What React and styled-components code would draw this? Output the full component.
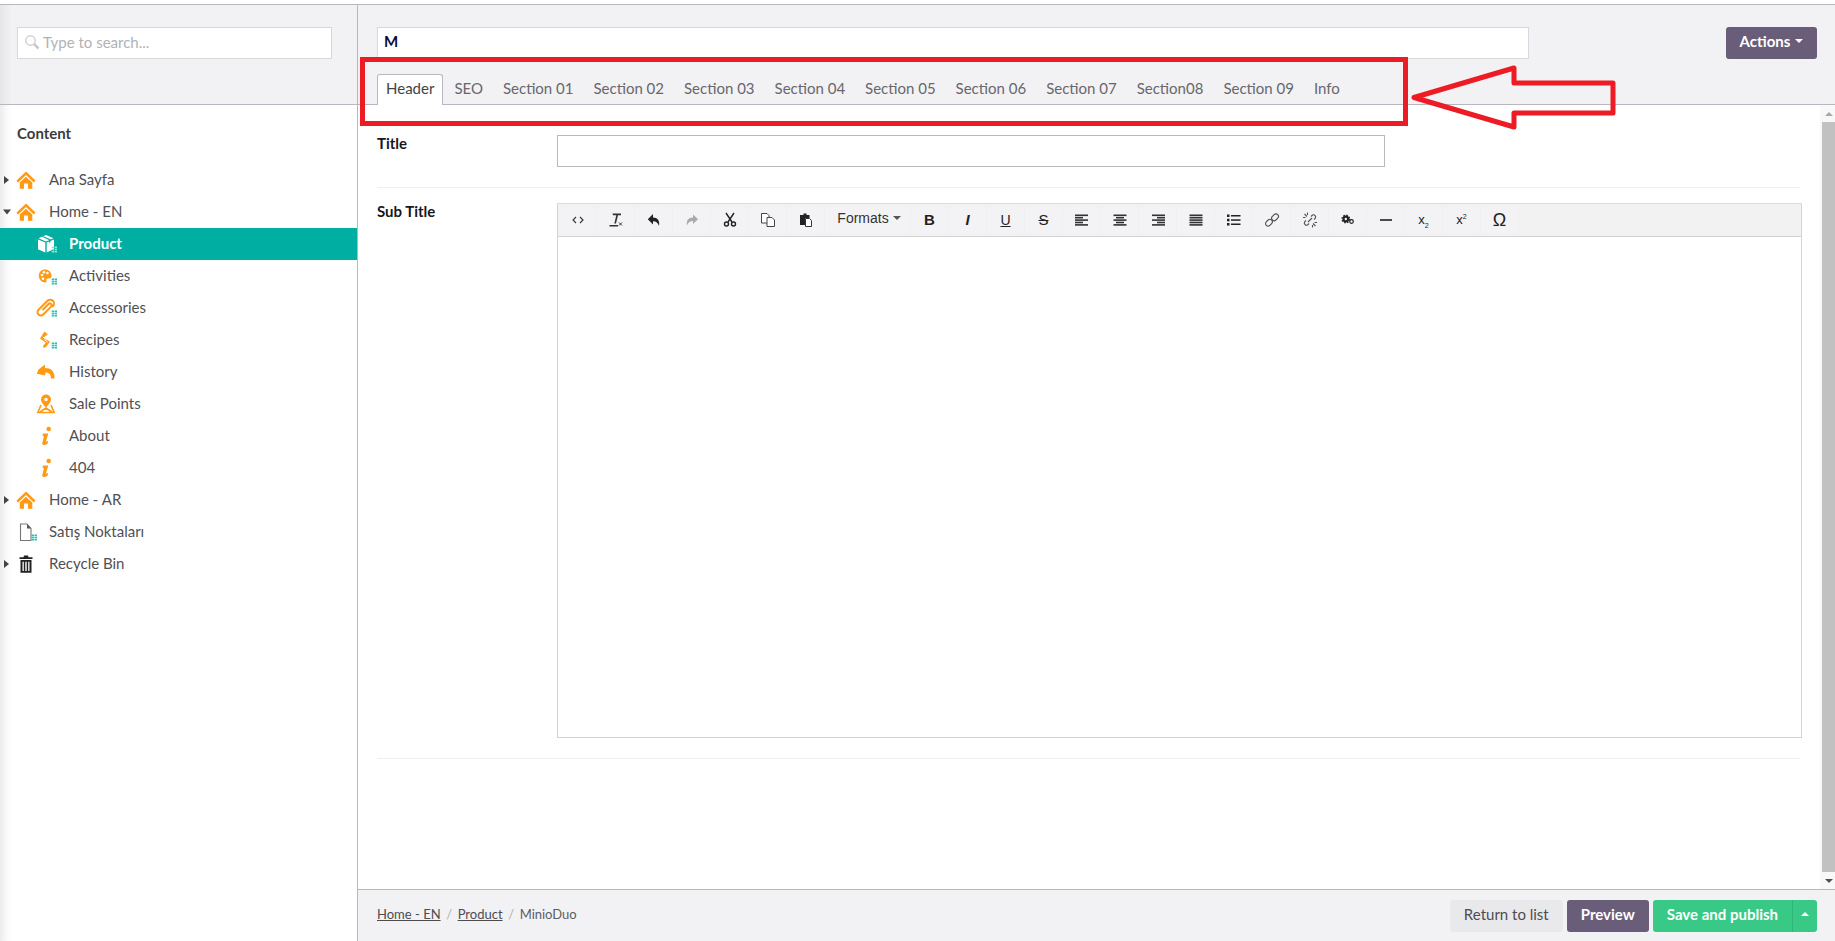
import React from "react";
import styled, { createGlobalStyle } from "styled-components";

const Global = createGlobalStyle`
  html, body { margin: 0; padding: 0; height: 100%; background: #fff; overflow: hidden; }
  #root { height: 100%; }
  * { box-sizing: border-box; }
  body { font-family: Lato, "Open Sans", "Liberation Sans", sans-serif; font-size: 15px; color: #515054; }
`;

const Page = styled.div`
  position: relative;
  height: 941px;
  padding-top: 4px;
  display: flex;
  flex-direction: column;
  overflow: hidden;
`;
const Shell = styled.div`
  flex: 1;
  min-height: 0;
  display: flex;
  border-top: 1px solid #b7b6bb;
`;
const Sidebar = styled.aside`
  width: 358px;
  flex: none;
  display: flex;
  flex-direction: column;
  border-right: 1px solid #b8b6c0;
  background: linear-gradient(to right, #ececec, #fafafa 7px, #fff 13px);
`;
const SearchArea = styled.div`
  height: 100px;
  flex: none;
  padding: 22px 0 0 17px;
  background: linear-gradient(to right, #e6e6e8, #f2f2f4 12px);
  border-bottom: 1px solid #b8b6c0;
`;
const SearchBox = styled.div`
  width: 315px;
  height: 32px;
  display: flex;
  align-items: center;
  gap: 3px;
  padding: 0 0 3px 6px;
  background: #fff;
  border: 1px solid #d8d8dc;
  color: #b2b2b5;
  font-size: 15px;
`;
const Heading = styled.div`
  height: 59px;
  padding: 18px 0 0 17px;
  line-height: 20px;
  font-weight: 700;
  font-size: 15px;
  color: #3c3c40;
`;
const Tree = styled.div`
  display: flex;
  flex-direction: column;
`;
const Row = styled.div`
  height: 32px;
  display: flex;
  align-items: center;
  padding-left: ${(p) => (p.$child ? 20 : 0)}px;
  background: ${(p) => (p.$active ? "#00aea2" : "transparent")};
  color: ${(p) => (p.$active ? "#fff" : "#515054")};
  font-weight: ${(p) => (p.$active ? 700 : 400)};
  font-size: 15px;
`;
const RowText = styled.span`
  padding-bottom: 2px;
`;
const Twisty = styled.span`
  width: 16px;
  flex: none;
  display: flex;
  align-items: center;
  padding-left: 3px;
`;
const IconBox = styled.span`
  width: 20px;
  height: 20px;
  flex: none;
  margin-right: 13px;
  display: block;
  svg { display: block; overflow: visible; }
`;
const Main = styled.main`
  flex: 1;
  min-width: 0;
  display: flex;
  flex-direction: column;
`;
const Header = styled.header`
  height: 100px;
  flex: none;
  padding: 22px 18px 0 19px;
  background: #f2f2f4;
  border-bottom: 1px solid #b8b6c0;
  display: flex;
  flex-direction: column;
  gap: 15px;
`;
const TopLine = styled.div`
  display: flex;
  justify-content: space-between;
`;
const NameBox = styled.div`
  width: 1152px;
  height: 32px;
  background: #fff;
  border: 1px solid #d8d8dc;
  padding-left: 6px;
  line-height: 27px;
  font-weight: 700;
  color: #0b0b38;
`;
const ActionButton = styled.div`
  width: 91px;
  height: 32px;
  border-radius: 3px;
  padding-bottom: 4px;
  background: #695d7a;
  color: #fff;
  font-weight: 700;
  display: flex;
  align-items: center;
  justify-content: center;
  gap: 5px;
`;
const Tabs = styled.nav`
  height: 31px;
  display: flex;
  align-items: flex-start;
`;
const Tab = styled.div`
  height: 31px;
  padding: ${(p) => (p.$active ? "0 8px 0 8px" : "0 10px")};
  margin-right: ${(p) => (p.$active ? "1px" : "0")};
  line-height: ${(p) => (p.$active ? "27px" : "29px")};
  font-size: 15px;
  color: ${(p) => (p.$active ? "#444" : "#68676c")};
  background: ${(p) => (p.$active ? "#fff" : "transparent")};
  border: ${(p) => (p.$active ? "1px solid #b8b6c0" : "none")};
  border-bottom: none;
  border-radius: 3px 3px 0 0;
  white-space: nowrap;
`;
const Body = styled.div`
  flex: 1;
  min-height: 0;
  display: flex;
`;
const Content = styled.div`
  flex: 1;
  min-width: 0;
  padding: 0 20px 0 19px;
`;
const FormRow = styled.div`
  display: grid;
  grid-template-columns: 180px 1fr;
  padding: ${(p) => (p.$first ? "30px" : "15px")} 0 20px;
  border-bottom: 1px solid #f0f0f2;
`;
const Label = styled.label`
  font-weight: 700;
  font-size: 15px;
  color: #17171c;
  line-height: 16px;
`;
const TextBox = styled.div`
  width: 828px;
  height: 32px;
  border: 1px solid #b9b9bc;
  background: #fff;
`;
const Editor = styled.div`
  height: 535px;
  margin-right: -2px;
  border: 1px solid #d3d3d5;
  border-top-color: #dcdcdc;
  display: flex;
  flex-direction: column;
`;
const Toolbar = styled.div`
  height: 33px;
  flex: none;
  display: flex;
  align-items: center;
  padding-left: 1px;
  gap: 1px;
  background: #f2f2f3;
  border-bottom: 1px solid #d3d3d5;
`;
const ToolButton = styled.span`
  width: ${(p) => (p.$wide ? "85px" : "37px")};
  height: 27px;
  flex: none;
  border-radius: 3px;
  background: #f3f3f5;
  box-shadow: 0 0 0 0.5px #efefef;
  display: flex;
  align-items: center;
  justify-content: center;
  gap: 4px;
  color: #333;
  font-family: "Liberation Sans", Arial, sans-serif;
  font-size: 14px;
  padding: ${(p) => (p.$wide ? "0 0 4px 3px" : "0 0 1px")};
`;
const Glyph = styled.span`
  font-family: "Liberation Sans", Arial, sans-serif;
  font-size: ${(p) => p.$size || 14}px;
  font-weight: ${(p) => (p.$bold ? 700 : 400)};
  font-style: ${(p) => (p.$italic ? "italic" : "normal")};
  text-decoration: ${(p) => p.$line || "none"};
  color: #222;
  line-height: 1;
  sub, sup { font-size: 7px; line-height: 0; }
`;
const Scrollbar = styled.div`
  width: 15px;
  flex: none;
  display: flex;
  flex-direction: column;
  background: #f8f8f8;
  align-items: flex-end;
`;
const ScrollArrow = styled.div`
  height: 17px;
  width: 13px;
  flex: none;
  display: flex;
  align-items: center;
  justify-content: center;
`;
const ScrollThumb = styled.div`
  flex: 1;
  width: 13px;
  background: #c1c1c1;
`;
const Footer = styled.footer`
  height: 52px;
  flex: none;
  display: flex;
  align-items: center;
  justify-content: space-between;
  padding: 0 18px 0 19px;
  background: #f2f2f4;
  border-top: 1px solid #b8b6c0;
`;
const Crumbs = styled.div`
  display: flex;
  gap: 5.6px;
  padding-bottom: 3px;
  font-size: 13px;
  color: #5d5c61;
`;
const CrumbLink = styled.a`
  color: #4d4c51;
  text-decoration: underline;
`;
const CrumbSep = styled.span`
  color: #b0afb4;
`;
const Actions = styled.div`
  display: flex;
  gap: 4px;
`;
const Btn = styled.div`
  height: 32px;
  padding: 0 ${(p) => (p.$caret ? "0" : "14px")} 3px;
  width: ${(p) => (p.$caret ? "25px" : "auto")};
  display: flex;
  align-items: center;
  justify-content: center;
  font-size: 15px;
  font-weight: ${(p) => (p.$plain ? 400 : 700)};
  color: ${(p) => (p.$plain ? "#4d4c51" : "#fff")};
  background: ${(p) => p.$bg};
  border-radius: ${(p) => (p.$caret ? "0 3px 3px 0" : p.$joined ? "3px 0 0 3px" : "3px")};
  border-left: ${(p) => (p.$caret ? "1px solid #2fb577" : "none")};
`;
const Group = styled.div`
  display: flex;
`;
const RedBox = styled.div`
  position: absolute;
  left: 360px;
  top: 57px;
  width: 1048px;
  height: 69px;
  border: 5px solid #ed1c24;
  pointer-events: none;
`;
const RedArrow = styled.svg`
  position: absolute;
  left: 1400px;
  top: 55px;
  pointer-events: none;
`;

const OR = "#ff9a15";
const Dots = ({ c = "#1fc6b6" }) => (
  <g fill={c}>
    {[0, 1].map((x) =>
      [0, 1, 2].map((y) => <rect key={x + "" + y} x={15.7 + x * 2.9} y={12.5 + y * 2.2} width="2.4" height="1.6" />)
    )}
  </g>
);
const Svg = ({ children }) => <svg width="20" height="20" viewBox="0 0 20 20">{children}</svg>;

const HomeIcon = () => (
  <Svg>
    <path fill={OR} d="M10 1.5 19.5 10.6 17.8 12.4 10 5 2.2 12.4.5 10.6Z" />
    <path fill={OR} d="M3.7 12.6 10 6.7 16.3 12.6V18.7H12V13.6H8V18.7H3.7Z" />
  </Svg>
);
const PackageIcon = () => (
  <Svg>
    <path fill="#fff" d="M10 1 17.500 4.200 10 7.400 2.500 4.200ZM2 5.400 9.300 8.600V18.500L2 15.200ZM18 5.400V15L10.700 18.500V8.600Z" />
    <path fill="#00aea2" d="M5.800 2.800 13 6V8.800L14.500 8.200V5.300L7.300 2.200Z" />
    <Dots c="#8fe3dc" />
  </Svg>
);
const PaletteIcon = () => (
  <Svg>
    <path fill={OR} d="M9 3.500C5.300 3.500 2.800 6.100 2.800 9.800 2.800 13.500 5.600 16.500 9 16.500c1.400 0 1.800-1 1.400-2-.4-1 .1-1.900 1.200-1.900h1.500c1.600 0 2.400-1 2.400-2.500C15.500 6 12.700 3.500 9 3.500Z" />
    <g fill="#fff">
      <circle cx="6" cy="9" r="1.300" />
      <circle cx="8" cy="6.300" r="1.300" />
      <circle cx="11.400" cy="7" r="1.300" />
      <circle cx="7" cy="12.800" r="1.300" />
    </g>
    <Dots />
  </Svg>
);
const ClipIcon = () => (
  <Svg>
    <path fill="none" stroke={OR} strokeWidth="2" strokeLinecap="round" d="M7 11.500 12.500 6a1.800 1.800 0 0 1 2.600 2.600L7.200 16.500a3.300 3.300 0 0 1-4.700-4.700L11.500 2.800a3.800 3.800 0 0 1 5.400 5.400" />
    <Dots />
  </Svg>
);
const RecipeIcon = () => (
  <Svg>
    <path fill={OR} d="M8.500 1.500 11.800 4.500 7.500 7.500 14 11.800 10 17 7.800 18 7 16 9.800 12.800 4 8.500Z" />
    <path stroke="#fff" strokeWidth="1" d="M6.800 7 10.500 9.800M8.500 9.800 11.500 12" />
    <Dots />
  </Svg>
);
const UndoIcon = () => (
  <Svg>
    <path fill={OR} d="M2.500 7.500 9 2.500V6C15 6 19 9 18.500 16.500H15C15 12.800 13.500 10.500 9.500 10.500L9 13.500 .8 11.800Z" />
  </Svg>
);
const PinIcon = () => (
  <Svg>
    <path fill={OR} d="M10 .5a5 5 0 0 0-5 5c0 3.400 5 8 5 8s5-4.600 5-8a5 5 0 0 0-5-5Zm0 3.200a1.800 1.800 0 1 1 0 3.600 1.800 1.800 0 0 1 0-3.600Z" />
    <path fill="none" stroke={OR} strokeWidth="1.600" d="M5 11 1.800 18.500H18.200L15 11M4 18 10 14 16 18" />
  </Svg>
);
const InfoIcon = () => (
  <Svg>
    <circle cx="12.700" cy="3" r="2.300" fill={OR} />
    <path fill={OR} d="M7 7.500H12.300L9.900 15.800 12.200 15 11.700 17.500C10 18.500 8.800 19 7.600 19 6.400 19 6 18 6.300 16.800L8 10 6.500 10Z" />
  </Svg>
);
const DocIcon = () => (
  <Svg>
    <path fill="#fff" stroke="#77777a" strokeWidth="1.100" d="M4.500 2H11L15 6.500V18.500H4.500Z" />
    <path fill="#55555a" d="M11 2 15 6.500H11Z" />
    <Dots />
  </Svg>
);
const TrashIcon = () => (
  <Svg>
    <path fill="#222" d="M8 1.500H12L12.500 3.200H16.500V5H3.500V3.200H7.500ZM4.500 6H15.500V18.800H4.500ZM6.500 7.800V17H7.800V7.800ZM9.300 7.800V17H10.700V7.800ZM12.200 7.800V17H13.500V7.800Z" />
  </Svg>
);

const TriRight = () => (
  <svg width="6" height="8" viewBox="0 0 6 8"><path fill="#444" d="M1 0 6 4 1 8Z" /></svg>
);
const TriDown = () => (
  <svg width="8" height="6" viewBox="0 0 8 6"><path fill="#444" d="M0 .5H8L4 5.500Z" /></svg>
);
const SmallCaret = ({ up, c = "#fff" }) => (
  <svg width="8" height="4" viewBox="0 0 8 4">
    <path fill={c} d={up ? "M0 4 4 0 8 4Z" : "M0 0H8L4 4Z"} />
  </svg>
);
const SearchGlyph = () => (
  <svg width="16" height="16" viewBox="0 0 16 16">
    <circle cx="6.500" cy="6.500" r="4.700" fill="none" stroke="#d2d2d4" strokeWidth="1.500" />
    <path d="M10 10 14.500 14.500" stroke="#c8c8ca" strokeWidth="2.500" />
  </svg>
);

const T = ({ children }) => <svg width="16" height="16" viewBox="0 0 16 16">{children}</svg>;
const alignLines = {
  left: [[1, 13], [1, 8], [1, 13], [1, 8], [1, 13]],
  center: [[1.500, 13], [4, 8], [1.500, 13], [4, 8], [1.500, 13]],
  right: [[2, 13], [7, 8], [2, 13], [7, 8], [2, 13]],
  full: [[1.500, 13], [1.500, 13], [1.500, 13], [1.500, 13], [1.500, 13]],
};
const Align = ({ kind }) => (
  <T>
    <g fill="#333">
      {alignLines[kind].map(([x, w], i) => (
        <rect key={i} x={x} y={2.500 + i * 2.400} width={w} height="1.600" />
      ))}
    </g>
  </T>
);

const toolsA = [
  <T><path fill="none" stroke="#333" strokeWidth="1.100" d="M6 5 3 8 6 11M10 5 13 8 10 11" /></T>,
  <T><path fill="#333" d="M4.500 1.500H13V3.200H10L8 11.500H6.300L8.300 3.200H5ZM1.500 13H10V14.400H1.500Z" /><path stroke="#333" d="M11 10.500 14 13.500M14 10.500 11 13.500" /></T>,
  <T><path fill="#222" d="M7 2V5.500C11.500 5.500 14 8.500 13 14 12 10.800 10.300 9.200 7 9.200V12.500L1.800 7.200Z" /></T>,
  <T><path fill="#aaa" d="M9 2.500V5.500C4.500 5.500 2 8.500 3 13.500 4 10.500 5.700 9 9 9V12L14 7.200Z" /></T>,
  <T><g fill="none" stroke="#222" strokeWidth="1.400"><path d="M4 1 10 10M12 1 6 10" /><circle cx="4.500" cy="12" r="2" /><circle cx="11.500" cy="12" r="2" /></g></T>,
  <T><g fill="#fff" stroke="#444"><path d="M1.500 1.500H7L9 3.500V11H1.500Z" /><path d="M7 5.500H12L14.500 8V14.500H7Z" /></g></T>,
  <T><path fill="#222" d="M2 3H5.500V1.500H8.500V3H11.500V6H7V13H2Z" /><path fill="#fff" stroke="#333" d="M7.500 6.500H11.500L13.500 8.500V14.500H7.500Z" /></T>,
];
const linkIcon = (
  <T><g fill="none" stroke="#555" strokeWidth="1.200"><rect x="8.600" y="1.500" width="5" height="7.500" rx="2.500" transform="rotate(45 11 5.200)" /><rect x="2.400" y="7" width="5" height="7.500" rx="2.500" transform="rotate(45 5 10.800)" /></g></T>
);
const unlinkIcon = (
  <T><g fill="none" stroke="#555" strokeWidth="1.100"><path d="M9 4.500 10.500 3A2.300 2.300 0 0 1 13.500 6L12 7.500M7 11.500 5.500 13A2.300 2.300 0 0 1 2.500 10L4 8.500M6 10 10 6" /><path d="M2.500 2 5 4.500M1 5.500H3.500M5.500 .5V3M13.500 14 11 11.500M15 10.500H12.500M10.500 15.500V13" /></g></T>
);
const gearIcon = (
  <T>
    <circle cx="5.800" cy="7" r="2.300" fill="none" stroke="#222" strokeWidth="2.200" />
    <circle cx="5.800" cy="7" r="3.800" fill="none" stroke="#222" strokeWidth="1.400" strokeDasharray="1.500 1.500" />
    <circle cx="11.500" cy="9.500" r="1.800" fill="none" stroke="#222" strokeWidth="1.200" />
  </T>
);
const listIcon = (
  <T>
    <g fill="#222">
      <rect x="1" y="2.500" width="2.500" height="2.500" /><rect x="1" y="6.800" width="2.500" height="2.500" /><rect x="1" y="11" width="2.500" height="2.500" />
      <rect x="5" y="3" width="9.500" height="1.500" /><rect x="5" y="7.300" width="9.500" height="1.500" /><rect x="5" y="11.500" width="9.500" height="1.500" />
    </g>
  </T>
);

const treeA = [
  { label: "Ana Sayfa", icon: <HomeIcon />, twist: <TriRight /> },
  { label: "Home - EN", icon: <HomeIcon />, twist: <TriDown /> },
  { label: "Product", icon: <PackageIcon />, child: true, active: true },
  { label: "Activities", icon: <PaletteIcon />, child: true },
  { label: "Accessories", icon: <ClipIcon />, child: true },
  { label: "Recipes", icon: <RecipeIcon />, child: true },
  { label: "History", icon: <UndoIcon />, child: true },
  { label: "Sale Points", icon: <PinIcon />, child: true },
  { label: "About", icon: <InfoIcon />, child: true },
  { label: "404", icon: <InfoIcon />, child: true },
  { label: "Home - AR", icon: <HomeIcon />, twist: <TriRight /> },
  { label: "Satış Noktaları", icon: <DocIcon /> },
  { label: "Recycle Bin", icon: <TrashIcon />, twist: <TriRight /> },
];
const tabs = ["Header", "SEO", "Section 01", "Section 02", "Section 03", "Section 04", "Section 05", "Section 06", "Section 07", "Section08", "Section 09", "Info"];

export default function App() {
  return (
    <Page>
      <Global />
      <Shell>
        <Sidebar>
          <SearchArea>
            <SearchBox>
              <SearchGlyph />
              Type to search...
            </SearchBox>
          </SearchArea>
          <Heading>Content</Heading>
          <Tree>
            {treeA.map((n) => (
              <Row key={n.label} $child={n.child} $active={n.active}>
                {!n.child ? <Twisty>{n.twist}</Twisty> : <Twisty />}
                <IconBox>{n.icon}</IconBox>
                <RowText>{n.label}</RowText>
              </Row>
            ))}
          </Tree>
        </Sidebar>
        <Main>
          <Header>
            <TopLine>
              <NameBox>M</NameBox>
              <ActionButton>Actions <SmallCaret /></ActionButton>
            </TopLine>
            <Tabs>
              {tabs.map((t, i) => (
                <Tab key={t} $active={i === 0}>{t}</Tab>
              ))}
            </Tabs>
          </Header>
          <Body>
            <Content>
              <FormRow $first>
                <Label>Title</Label>
                <TextBox />
              </FormRow>
              <FormRow>
                <Label>Sub Title</Label>
                <Editor>
                  <Toolbar>
                    {toolsA.map((t, i) => <ToolButton key={i}>{t}</ToolButton>)}
                    <ToolButton $wide>Formats <SmallCaret c="#555" /></ToolButton>
                    <ToolButton><Glyph $bold $size={15}>B</Glyph></ToolButton>
                    <ToolButton><Glyph $italic $bold $size={15}>I</Glyph></ToolButton>
                    <ToolButton><Glyph $line="underline">U</Glyph></ToolButton>
                    <ToolButton><Glyph $line="line-through" $size={15}>S</Glyph></ToolButton>
                    <ToolButton><Align kind="left" /></ToolButton>
                    <ToolButton><Align kind="center" /></ToolButton>
                    <ToolButton><Align kind="right" /></ToolButton>
                    <ToolButton><Align kind="full" /></ToolButton>
                    <ToolButton>{listIcon}</ToolButton>
                    <ToolButton>{linkIcon}</ToolButton>
                    <ToolButton>{unlinkIcon}</ToolButton>
                    <ToolButton>{gearIcon}</ToolButton>
                    <ToolButton><T><rect x="2" y="7.200" width="12" height="1.600" fill="#222" /></T></ToolButton>
                    <ToolButton><Glyph $size={13}>x<sub>2</sub></Glyph></ToolButton>
                    <ToolButton><Glyph $size={13}>x<sup>2</sup></Glyph></ToolButton>
                    <ToolButton><Glyph $size={18}>Ω</Glyph></ToolButton>
                  </Toolbar>
                </Editor>
              </FormRow>
            </Content>
            <Scrollbar>
              <ScrollArrow><SmallCaret up c="#a8a8a8" /></ScrollArrow>
              <ScrollThumb />
              <ScrollArrow><SmallCaret c="#505050" /></ScrollArrow>
            </Scrollbar>
          </Body>
          <Footer>
            <Crumbs>
              <CrumbLink>Home - EN</CrumbLink>
              <CrumbSep>/</CrumbSep>
              <CrumbLink>Product</CrumbLink>
              <CrumbSep>/</CrumbSep>
              <span>MinioDuo</span>
            </Crumbs>
            <Actions>
              <Btn $plain $bg="#e9e9ec">Return to list</Btn>
              <Btn $bg="#695d7a">Preview</Btn>
              <Group>
                <Btn $joined $bg="#38c987">Save and publish</Btn>
                <Btn $caret $bg="#38c987"><SmallCaret up /></Btn>
              </Group>
            </Actions>
          </Footer>
        </Main>
      </Shell>
      <RedBox />
      <RedArrow width="220" height="80" viewBox="0 0 220 80">
        <path d="M14 42.500 114 13V28H213V58H114V72Z" fill="none" stroke="#ed1c24" strokeWidth="5" strokeLinejoin="round" />
      </RedArrow>
    </Page>
  );
}
